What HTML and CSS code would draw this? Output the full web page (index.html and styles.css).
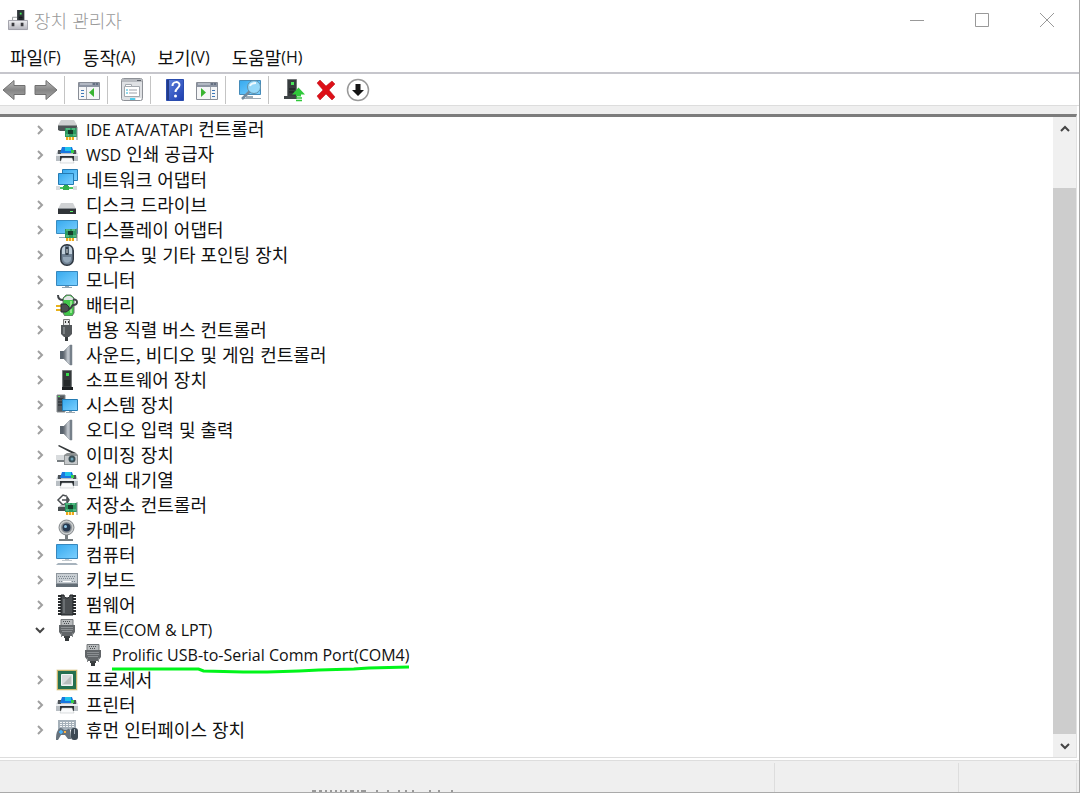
FILE: index.html
```html
<!DOCTYPE html>
<html lang="ko">
<head>
<meta charset="utf-8">
<title>장치 관리자</title>
<link rel="stylesheet" href="styles.css">
</head>
<body>
<svg class="defs" aria-hidden="true">
  <defs>
    <linearGradient id="g-screen" x1="0" y1="0" x2="1" y2="1"><stop offset="0" stop-color="#36a9ee"/><stop offset="1" stop-color="#7cd0ff"/></linearGradient>
    <linearGradient id="g-metal" x1="0" y1="0" x2="0" y2="1"><stop offset="0" stop-color="#f0f0f3"/><stop offset="1" stop-color="#b4b4bc"/></linearGradient>
    <linearGradient id="g-cone" x1="0" y1="0" x2="1" y2="0"><stop offset="0" stop-color="#646b73"/><stop offset="0.5" stop-color="#c6ccd3"/><stop offset="1" stop-color="#737b85"/></linearGradient>
    <linearGradient id="g-arrow" x1="0" y1="0" x2="0" y2="1"><stop offset="0" stop-color="#bcbcbc"/><stop offset="0.5" stop-color="#858585"/><stop offset="1" stop-color="#a9a9a9"/></linearGradient>
    <linearGradient id="g-help" x1="0" y1="0" x2="1" y2="1"><stop offset="0" stop-color="#5f83df"/><stop offset="1" stop-color="#1c3cae"/></linearGradient>
    <g id="p-card"><path d="M9 7h12v9H9z" fill="#2b9a60"/><path d="M10 8h4M16 8h3M10 14h3M17 14h3" stroke="#7ad2a0"/><path d="M12 9h5v4h-5z" fill="#173f2c"/><path d="M10 16h8v3h-8z" fill="#eda61c"/><path d="M12.500 16v3M15.500 16v3" stroke="#fff0a5"/><path d="M21 6v13" stroke="#858b8e"/></g>
  </defs>
  <symbol id="i-app" viewBox="0 0 22 22"><path d="M10 0h8v12h-8z" fill="#30363a"/><path d="M12 8h4M12 10h4" stroke="#0b0d0e"/><path d="M13 3h2v2h-2z" fill="#42e557"/><path d="M.5 11.500h21v10H.5z" fill="url(#g-metal)" stroke="#9b9ba3"/><path d="M4 14h3v4H4zM14 14h3v4h-3z" fill="#3b3b3f"/><path d="M5 11V8h5" fill="none" stroke="#94989b"/></symbol>
  <symbol id="i-ide" viewBox="0 0 22 22"><path d="M5 1h13l3 5H2z" fill="#cfd0d1"/><path d="M2 6h19v5l-2 1H4l-2-1z" fill="#4e5355"/><path d="M2 6.500h19" stroke="#8b8f90"/><use href="#p-card" y="2"/></symbol>
  <symbol id="i-printer" viewBox="0 0 22 22"><path d="M2 6h18l2 5v6H0v-6z" fill="#b9bfc4"/><path d="M2 6h3v4H2zM17 6h3v4h-3z" fill="#4d5358"/><path d="M6 3h10l2 6H4z" fill="#1877e0"/><path d="M9 3h6v4H9z" fill="#20c3ea"/><path d="M15 6h3v3h-3z" fill="#35cc48"/><path d="M0 10h22v2H0z" fill="#eceff1"/><path d="M4 12h14v5H4z" fill="#2b3034"/><path d="M6 14h10l2 5H4z" fill="#fafbfc" stroke="#b4babd" stroke-width=".5"/></symbol>
  <symbol id="i-network" viewBox="0 0 22 22"><path d="M6.500.5h15v11h-15z" fill="url(#g-screen)" stroke="#247ab2"/><path d="M2.500 4.500h15v11h-15z" fill="url(#g-screen)" stroke="#247ab2"/><path d="M8 16h4v2H8z" fill="#29a94b"/><path d="M3 18h15v2H3z" fill="#4cc862"/><path d="M0 17h4v4H0zM17 17h4v4h-4z" fill="#d9dcde"/><path d="M7 17h6v4H7z" fill="#35ae4c"/></symbol>
  <symbol id="i-disk" viewBox="0 0 22 22"><path d="M5 9h12l3 6H2z" fill="#d0d2d4"/><path d="M2 14h18v6H2z" fill="#303438"/><path d="M2 14.500h18" stroke="#8a8f93"/><path d="M14 17h3v1h-3z" fill="#5cf66a"/></symbol>
  <symbol id="i-display" viewBox="0 0 22 22"><path d="M.5 1.500h21v13H.5z" fill="url(#g-screen)" stroke="#388cc0"/><path d="M3 18h7v1H3z" fill="#9ba9b4"/><use href="#p-card" y="3"/></symbol>
  <symbol id="i-mouse" viewBox="0 0 22 22"><rect x="4.750" y=".75" width="12.500" height="20.500" rx="6" fill="#6f8193" stroke="#2f3842" stroke-width="1.500"/><path d="M6 10V6c0-3 2-4 3-4v8zM13 2c1 0 3 1 3 4v4h-3z" fill="#c0cfdb"/><path d="M9.500 3h3v8h-3z" fill="#333e49"/><path d="M10.500 5h1v4h-1z" fill="#e6edf2"/><path d="M7 13v2c1 5 7 5 8 0v-2z" fill="#94a7b8"/></symbol>
  <symbol id="i-monitor" viewBox="0 0 22 22"><path d="M.5 2.500h21v14H.5z" fill="url(#g-screen)" stroke="#3787bd"/><path d="M9 17h4v1H9zM6 18h10v1H6z" fill="#93a4b1"/></symbol>
  <symbol id="i-battery" viewBox="0 0 22 22"><path d="M7 4l3-3h5l3 3v15l-2 3H9l-2-3z" fill="#42c64b" stroke="#68706d"/><path d="M8 4l3-2h3l3 2v2H8z" fill="#e1e4e5"/><path d="M15 7v12" stroke="#90e88a" stroke-width="2"/><path d="M2 1c0 3 2 5 5 5M13 15c3 0 2-3 4-4 2 0 4-1 4-3 0-2-2-3-4-2" fill="none" stroke="#404448" stroke-width="2"/><path d="M0 12h6M0 16h6" stroke="#e7b21d" stroke-width="2"/><path d="M5 10h5l3 3v3l-3 2H5z" fill="#4a4e50" stroke="#292d30"/></symbol>
  <symbol id="i-usb" viewBox="0 0 22 22"><path d="M7.500.5h6v6h-6z" fill="#e5e6e6" stroke="#777"/><path d="M9 2h1v2H9zM12 2h1v2h-1z" fill="#333"/><path d="M5 6h11v9l-3 3H8l-3-3z" fill="#53575a"/><path d="M7 8h2v7H7z" fill="#7c8184"/><path d="M9 18h3v4H9z" fill="#363a3c"/></symbol>
  <symbol id="i-sound" viewBox="0 0 22 22"><path d="M4 7h5v8H4z" fill="#59636d"/><path d="M8 7l6-6h2v20h-2l-6-6z" fill="url(#g-cone)" stroke="#7d868f" stroke-width=".5"/><path d="M14 1h2v20h-2z" fill="#76808a"/></symbol>
  <symbol id="i-software" viewBox="0 0 22 22"><path d="M6.500 1.500h9v17h-9z" fill="#35393b" stroke="#75797b"/><path d="M10 4h3v3h-3z" fill="#38dc4c"/><path d="M8 12h6M8 14h6M8 16h6" stroke="#151819"/><path d="M6 18h11v3H6z" fill="#1d2022"/></symbol>
  <symbol id="i-system" viewBox="0 0 22 22"><path d="M1 1h8v17H1z" fill="#555b60" stroke="#888d90"/><path d="M2 5h5M2 8h5M2 11h4" stroke="#20262a"/><path d="M2 2h2v1H2z" fill="#54e060"/><path d="M6.500 5.500h15v11h-15z" fill="url(#g-screen)" stroke="#247ab2"/><path d="M13 17h3v1h3v1h-9v-1h3z" fill="#9ba8b1"/></symbol>
  <symbol id="i-imaging" viewBox="0 0 22 22"><path d="M3 1l17 8-1 2L2 2z" fill="#34383a"/><path d="M0 11h9v5H0z" fill="#d9dcde"/><path d="M1 16h9v2H1z" fill="#777d81"/><path d="M8 11l3-2h9l2 2v10H8z" fill="#8d9192"/><path d="M9 12h12v8H9z" fill="#c5c8ca"/><circle cx="16" cy="15" r="3.500" fill="#3b5058"/><circle cx="16" cy="15" r="1.500" fill="#6fa2b7"/></symbol>
  <symbol id="i-storage" viewBox="0 0 22 22"><path d="M10 2L7 1 2 6l5 5 3-2M6 6h5V3l2 3-2 3V6" fill="none" stroke="#4a4e51" stroke-width="1.500"/><path d="M2 13h10v4H2z" fill="#484f51"/><path d="M2 13l3-2h6v2z" fill="#b5b9bc"/><use href="#p-card" y="2"/></symbol>
  <symbol id="i-camera" viewBox="0 0 22 22"><circle cx="10.500" cy="8.500" r="7.500" fill="#c9cccd" stroke="#84888b"/><circle cx="10.500" cy="8.500" r="5.500" fill="#8b9095"/><circle cx="10.500" cy="8.500" r="4" fill="#26384f"/><circle cx="9.500" cy="7.500" r="1.500" fill="#8fc7e8"/><path d="M9 16h3v4h5v2H3v-2h6z" fill="#777d80"/></symbol>
  <symbol id="i-computer" viewBox="0 0 22 22"><path d="M.5.5h21v14H.5z" fill="url(#g-screen)" stroke="#3787bd"/><path d="M9 15h4v1h3v1H6v-1h3z" fill="#c2c9ce"/><path d="M2 19h18l2 2H0z" fill="#a7b3bd"/></symbol>
  <symbol id="i-keyboard" viewBox="0 0 22 22"><path d="M0 4h22v14H0z" fill="#8e969d"/><path d="M1 5h20v9H1z" fill="#c8ced3"/><path d="M2 7.500h18M3 9.500h16M3 12.500h3M16 12.500h3" stroke="#7c8790" stroke-dasharray="1 1"/><path d="M7 12.500h8" stroke="#fff"/><path d="M0 15h22v3H0z" fill="#636d75"/></symbol>
  <symbol id="i-firmware" viewBox="0 0 22 22"><path d="M3.500 1v20M18.500 1v20" stroke="#292c2e" stroke-width="3" stroke-dasharray="2 1"/><path d="M5 1h3c0 4 6 4 6 0h3v20H5z" fill="#4b4f52" stroke="#1d2022"/><path d="M7 5h2v14H7z" fill="#6a6f72"/></symbol>
  <symbol id="i-port" viewBox="0 0 22 22"><path d="M5 .5h12v6H5z" fill="#b8bbbd" stroke="#74787b"/><path d="M7 2.500h8M8 4.500h6" stroke="#4a4e51" stroke-dasharray="1 1"/><path d="M3 6h16v7l-3 4H6l-3-4z" fill="#626669"/><path d="M5 8.500h12M5 10.500h12M6 12.500h10" stroke="#8b8f92"/><path d="M8 17h6v2H8z" fill="#3d4143"/><path d="M9 19h4v3H9z" fill="#35393b"/><path d="M5.500 14v4M16.500 14v4" stroke="#85898b"/></symbol>
  <symbol id="i-cpu" viewBox="0 0 22 22"><rect x=".5" y=".5" width="21" height="21" fill="#cbb66b" stroke="#fff" stroke-dasharray="1 1"/><path d="M2 2h18v18H2z" fill="#246f4f"/><path d="M5.500 5.500h11v11h-11z" fill="#d9dcdc" stroke="#f3f5f4"/><path d="M7 15L15 7v8z" fill="#b9bebd"/></symbol>
  <symbol id="i-hid" viewBox="0 0 22 22"><path d="M2 1h18v10H2z" fill="#a5b0b9"/><path d="M4 3.500h14M4 5.500h14M4 7.500h14" stroke="#f4f6f7" stroke-dasharray="2 1"/><path d="M2 11c2-3 4-2 6 0h3c2-3 4-1 4 9h-3l-3-4H5l-3 5H0c0-4 0-7 2-10z" fill="#67737d"/><path d="M3 13h4M5 11v4" stroke="#4ab8ff" stroke-width="1.500"/><path d="M8 12h2v2H8z" fill="#ffb340"/><rect x="15" y="9" width="7" height="12" rx="3" fill="#3d4954"/><path d="M18.500 10v5" stroke="#a6b2bd"/></symbol>
  <symbol id="i-back" viewBox="0 0 24 24"><path d="M1 12L12 2.500v5h11v9H12v5z" fill="url(#g-arrow)" stroke="#707070" stroke-linejoin="round"/></symbol>
  <symbol id="i-forward" viewBox="0 0 24 24"><path d="M23 12L12 2.500v5H1v9h11v5z" fill="url(#g-arrow)" stroke="#707070" stroke-linejoin="round"/></symbol>
  <symbol id="i-tree" viewBox="0 0 24 24"><path d="M1.500 4.500h21v17h-21z" fill="#f5f6f7" stroke="#888d96"/><path d="M2 5h20v4H2z" fill="#8d95a3"/><path d="M3 6h12" stroke="#d8dce3"/><path d="M16 6h2M19 6h2" stroke="#3d4a60"/><path d="M9.500 9v12" stroke="#a2a7ae"/><path d="M4 12.500h4M4 15.500h4M4 18.500h4" stroke="#3f79b8" stroke-dasharray="3 1"/><path d="M17 10v9l-5-4.500z" fill="#39b431"/></symbol>
  <symbol id="i-pane" viewBox="0 0 24 24"><path d="M1.500 4.500h21v17h-21z" fill="#f5f6f7" stroke="#888d96"/><path d="M2 5h20v4H2z" fill="#8d95a3"/><path d="M3 6h12" stroke="#d8dce3"/><path d="M16 6h2M19 6h2" stroke="#3d4a60"/><path d="M15.500 9v12" stroke="#a2a7ae"/><path d="M17 12.500h4M17 15.500h4M17 18.500h4" stroke="#3f79b8" stroke-dasharray="3 1"/><path d="M6 10v9l5-4.500z" fill="#39b431"/></symbol>
  <symbol id="i-props" viewBox="0 0 24 24"><rect x="1.500" y=".5" width="21" height="22" rx="2" fill="#dfe1e4" stroke="#8e9197"/><path d="M2 1h20v3H2z" fill="#b8bbc0"/><path d="M17 2.500h4" stroke="#5d6269"/><path d="M4.500 8.500h15v10h-15z" fill="#fff" stroke="#a3a8ae"/><path d="M5.500 6.500h6v2h-6z" fill="#fff" stroke="#a3a8ae"/><path d="M6 12h2M6 15h2" stroke="#2ab4d8"/><path d="M9 12h8M9 15h8" stroke="#9ca1a9"/><path d="M10 20h5v2h-5z" fill="#50cceb"/><path d="M16 20h5v2h-5z" fill="#fff"/></symbol>
  <symbol id="i-help" viewBox="0 0 24 24"><path d="M3.500 1.500h17v21h-17z" fill="url(#g-help)" stroke="#2a4cae"/><path d="M5 2v20" stroke="#233b87" stroke-width="2"/><path d="M9.500 8c0-5 7-5 7-1 0 3-4 3-4 7" fill="none" stroke="#fff" stroke-width="2"/><circle cx="12.500" cy="18" r="1.500" fill="#fff"/></symbol>
  <symbol id="i-scan" viewBox="0 0 24 24"><path d="M1.500 2.500h21v14h-21z" fill="url(#g-screen)" stroke="#458bb9"/><path d="M8 18h7v2H8zM4 20h19v1H4z" fill="#9caab5"/><path d="M12 13l-8 8" stroke="#728a9d" stroke-width="2.500"/><circle cx="16" cy="9" r="6.500" fill="#9edcf9" fill-opacity=".85" stroke="#618fa9"/><path d="M12 8c1-3 4-3 6-3" fill="none" stroke="#eefaff" stroke-width="2"/></symbol>
  <symbol id="i-update" viewBox="0 0 24 24"><path d="M5.500 1.500h9v17h-9z" fill="#373c3e" stroke="#74787a"/><path d="M9 4h3v3H9z" fill="#49e55a"/><path d="M7 11h6M7 14h5" stroke="#171a1b"/><path d="M2 18h13v3H2z" fill="#404548"/><path d="M16.500 9.500l6.500 7h-4v2h-5v-2h-4z" fill="#30c83b"/><path d="M14 20h6M14 22.500h6" stroke="#30c83b" stroke-width="1.500"/></symbol>
  <symbol id="i-remove" viewBox="0 0 24 24"><path d="M3 5l3-3 6 6 6-5 3 3-6 6 6 7-3 3-6-6-6 6-3-4 6-6z" fill="#dd1018" stroke="#b80d15" stroke-width=".5"/></symbol>
  <symbol id="i-disable" viewBox="0 0 24 24"><circle cx="12" cy="12" r="10.500" fill="#fff" stroke="#999" stroke-width="1.500"/><path d="M9.500 6h5v6h3.500L12 18l-6-6h3.500z" fill="#151515"/></symbol>
  <symbol id="i-chev" viewBox="0 0 12 12"><path d="M4 2l4 4-4 4" fill="none" stroke="#a0a0a0" stroke-width="2"/></symbol>
  <symbol id="i-open" viewBox="0 0 12 12"><path d="M2 4l4 4 4-4" fill="none" stroke="#444" stroke-width="2"/></symbol>
  <symbol id="i-up" viewBox="0 0 12 12"><path d="M2 8l4-4 4 4" fill="none" stroke="#444" stroke-width="2"/></symbol>
</svg>

<div class="window">
  <header class="titlebar">
    <svg class="app-icon"><use href="#i-app"/></svg>
    <h1 class="title">장치 관리자</h1>
    <div class="controls">
      <button class="control" aria-label="최소화"><svg class="glyph" viewBox="0 0 16 16"><path d="M1 8.500h14"/></svg></button>
      <button class="control" aria-label="최대화"><svg class="glyph" viewBox="0 0 16 16"><path d="M1.500 1.500h13v13h-13z"/></svg></button>
      <button class="control" aria-label="닫기"><svg class="glyph" viewBox="0 0 16 16"><path d="M1 1l14 14M15 1L1 15"/></svg></button>
    </div>
  </header>
  <nav class="menubar">
    <button class="menu">파일<span class="latin">(F)</span></button>
    <button class="menu">동작<span class="latin">(A)</span></button>
    <button class="menu">보기<span class="latin">(V)</span></button>
    <button class="menu">도움말<span class="latin">(H)</span></button>
  </nav>
  <div class="toolbar">
    <div class="group"><button class="tool" aria-label="뒤로"><svg><use href="#i-back"/></svg></button><button class="tool" aria-label="앞으로"><svg><use href="#i-forward"/></svg></button></div>
    <div class="group"><button class="tool" aria-label="콘솔 트리"><svg><use href="#i-tree"/></svg></button></div>
    <div class="group"><button class="tool" aria-label="속성"><svg><use href="#i-props"/></svg></button></div>
    <div class="group"><button class="tool" aria-label="도움말"><svg><use href="#i-help"/></svg></button><button class="tool" aria-label="작업 창"><svg><use href="#i-pane"/></svg></button></div>
    <div class="group"><button class="tool" aria-label="하드웨어 변경 사항 검색"><svg><use href="#i-scan"/></svg></button></div>
    <div class="group"><button class="tool" aria-label="드라이버 업데이트"><svg><use href="#i-update"/></svg></button><button class="tool" aria-label="제거"><svg><use href="#i-remove"/></svg></button><button class="tool" aria-label="사용 안 함"><svg><use href="#i-disable"/></svg></button></div>
  </div>
  <main class="content">
    <ul class="tree">
      <li class="node"><button class="toggle" aria-label="펼치기"><svg><use href="#i-chev"/></svg></button><svg class="icon"><use href="#i-ide"/></svg><span class="label"><span class="latin">IDE ATA/ATAPI</span> 컨트롤러</span></li>
      <li class="node"><button class="toggle" aria-label="펼치기"><svg><use href="#i-chev"/></svg></button><svg class="icon"><use href="#i-printer"/></svg><span class="label"><span class="latin">WSD</span> 인쇄 공급자</span></li>
      <li class="node"><button class="toggle" aria-label="펼치기"><svg><use href="#i-chev"/></svg></button><svg class="icon"><use href="#i-network"/></svg><span class="label">네트워크 어댑터</span></li>
      <li class="node"><button class="toggle" aria-label="펼치기"><svg><use href="#i-chev"/></svg></button><svg class="icon"><use href="#i-disk"/></svg><span class="label">디스크 드라이브</span></li>
      <li class="node"><button class="toggle" aria-label="펼치기"><svg><use href="#i-chev"/></svg></button><svg class="icon"><use href="#i-display"/></svg><span class="label">디스플레이 어댑터</span></li>
      <li class="node"><button class="toggle" aria-label="펼치기"><svg><use href="#i-chev"/></svg></button><svg class="icon"><use href="#i-mouse"/></svg><span class="label">마우스 및 기타 포인팅 장치</span></li>
      <li class="node"><button class="toggle" aria-label="펼치기"><svg><use href="#i-chev"/></svg></button><svg class="icon"><use href="#i-monitor"/></svg><span class="label">모니터</span></li>
      <li class="node"><button class="toggle" aria-label="펼치기"><svg><use href="#i-chev"/></svg></button><svg class="icon"><use href="#i-battery"/></svg><span class="label">배터리</span></li>
      <li class="node"><button class="toggle" aria-label="펼치기"><svg><use href="#i-chev"/></svg></button><svg class="icon"><use href="#i-usb"/></svg><span class="label">범용 직렬 버스 컨트롤러</span></li>
      <li class="node"><button class="toggle" aria-label="펼치기"><svg><use href="#i-chev"/></svg></button><svg class="icon"><use href="#i-sound"/></svg><span class="label">사운드, 비디오 및 게임 컨트롤러</span></li>
      <li class="node"><button class="toggle" aria-label="펼치기"><svg><use href="#i-chev"/></svg></button><svg class="icon"><use href="#i-software"/></svg><span class="label">소프트웨어 장치</span></li>
      <li class="node"><button class="toggle" aria-label="펼치기"><svg><use href="#i-chev"/></svg></button><svg class="icon"><use href="#i-system"/></svg><span class="label">시스템 장치</span></li>
      <li class="node"><button class="toggle" aria-label="펼치기"><svg><use href="#i-chev"/></svg></button><svg class="icon"><use href="#i-sound"/></svg><span class="label">오디오 입력 및 출력</span></li>
      <li class="node"><button class="toggle" aria-label="펼치기"><svg><use href="#i-chev"/></svg></button><svg class="icon"><use href="#i-imaging"/></svg><span class="label">이미징 장치</span></li>
      <li class="node"><button class="toggle" aria-label="펼치기"><svg><use href="#i-chev"/></svg></button><svg class="icon"><use href="#i-printer"/></svg><span class="label">인쇄 대기열</span></li>
      <li class="node"><button class="toggle" aria-label="펼치기"><svg><use href="#i-chev"/></svg></button><svg class="icon"><use href="#i-storage"/></svg><span class="label">저장소 컨트롤러</span></li>
      <li class="node"><button class="toggle" aria-label="펼치기"><svg><use href="#i-chev"/></svg></button><svg class="icon"><use href="#i-camera"/></svg><span class="label">카메라</span></li>
      <li class="node"><button class="toggle" aria-label="펼치기"><svg><use href="#i-chev"/></svg></button><svg class="icon"><use href="#i-computer"/></svg><span class="label">컴퓨터</span></li>
      <li class="node"><button class="toggle" aria-label="펼치기"><svg><use href="#i-chev"/></svg></button><svg class="icon"><use href="#i-keyboard"/></svg><span class="label">키보드</span></li>
      <li class="node"><button class="toggle" aria-label="펼치기"><svg><use href="#i-chev"/></svg></button><svg class="icon"><use href="#i-firmware"/></svg><span class="label">펌웨어</span></li>
      <li class="node"><button class="toggle" aria-label="접기"><svg><use href="#i-open"/></svg></button><svg class="icon"><use href="#i-port"/></svg><span class="label">포트<span class="latin">(COM &amp; LPT)</span></span></li>
      <li class="node child"><svg class="icon"><use href="#i-port"/></svg><span class="label marked"><span class="latin">Prolific USB-to-Serial Comm Port(COM4)</span><svg class="marker" viewBox="0 0 299 10" preserveAspectRatio="none"><path d="M0 4h87l5 2 40 1h24l32-1 20-1 35-1 15-1 41-1"/></svg></span></li>
      <li class="node"><button class="toggle" aria-label="펼치기"><svg><use href="#i-chev"/></svg></button><svg class="icon"><use href="#i-cpu"/></svg><span class="label">프로세서</span></li>
      <li class="node"><button class="toggle" aria-label="펼치기"><svg><use href="#i-chev"/></svg></button><svg class="icon"><use href="#i-printer"/></svg><span class="label">프린터</span></li>
      <li class="node"><button class="toggle" aria-label="펼치기"><svg><use href="#i-chev"/></svg></button><svg class="icon"><use href="#i-hid"/></svg><span class="label">휴먼 인터페이스 장치</span></li>
    </ul>
    <div class="scrollbar">
      <button class="scroll-btn" aria-label="위로"><svg><use href="#i-up"/></svg></button>
      <div class="track"><div class="thumb"></div></div>
      <button class="scroll-btn" aria-label="아래로"><svg><use href="#i-open"/></svg></button>
    </div>
  </main>
  <footer class="statusbar">
    <div class="status main-status"><svg class="sliver" viewBox="0 0 146 2"><path d="M0 1h4M7 1h3M13 1h2M18 1h2M23 1h2M28 1h2M33 1h2M38 1h4M45 1h2M49 1h5M64 1h2M75 1h2M86 1h2M93 1h2M100 1h2M117 1h2M126 1h2M139 1h2"/></svg></div>
    <div class="status"></div>
    <div class="status"></div>
  </footer>
</div>
</body>
</html>
```
FILE: styles.css
```css
* { box-sizing: border-box; }
body {
  margin: 0;
  color: #111;
  background: #fff;
  font: 18px/25px "Noto Sans CJK KR", sans-serif;
}
button {
  display: flex;
  align-items: center;
  justify-content: center;
  padding: 0;
  border: 0;
  background: transparent;
  color: inherit;
  font: inherit;
}
svg { display: block; flex: none; }
.defs { position: absolute; width: 0; height: 0; }
.latin { font-family: "Open Sans", "Noto Sans CJK KR", sans-serif; font-size: 16px; }

.window {
  display: flex;
  flex-direction: column;
  min-height: 100vh;
  border-right: 1px solid #aaa;
  border-bottom: 1px solid #aaa;
}

.titlebar { display: flex; align-items: center; height: 40px; padding-left: 8px; }
.app-icon { width: 20px; height: 22px; }
.title { flex: 1; margin: 0 0 0 6px; color: #999; font-size: 18px; font-weight: 300; }
.controls { display: flex; }
.control { width: 65px; height: 40px; }
.glyph { width: 16px; height: 16px; fill: none; stroke: #999; }

.menubar { display: flex; align-items: center; gap: 22px; height: 32px; padding: 2px 10px 0; }

.toolbar {
  display: flex;
  align-items: center;
  height: 34px;
  border-top: 2px solid #c6c6cc;
  border-bottom: 1px solid #ddd;
}
.group {
  display: flex;
  align-items: center;
  gap: 8px;
  height: 28px;
  padding: 0 6px 0 12px;
  border-right: 1px solid #c4c4c4;
}
.group:first-child { padding: 0 6px 0 2px; }
.group:last-child { padding-left: 13px; border: 0; }
.tool svg { width: 24px; height: 24px; }

.content {
  display: flex;
  flex: 1;
  margin-top: 8px;
  margin-right: 2px;
  border-top: 3px solid #7c7c7c;
  border-right: 1px solid #e2e2e2;
  border-bottom: 1px solid #ddd;
  box-shadow: 0 -8px #efefef;
}
.tree { flex: 1; margin: 0; padding: 0 0 12px 34px; list-style: none; }
.node { display: flex; align-items: center; height: 25px; }
.toggle svg { width: 12px; height: 12px; }
.icon { width: 22px; height: 22px; margin-left: 10px; }
.label { margin-left: 8px; white-space: nowrap; }
.child { padding-left: 38px; }
.marked { position: relative; }
.marker {
  position: absolute;
  left: 0;
  top: 24px;
  width: 100%;
  height: 10px;
  fill: none;
  stroke: #00f51a;
  stroke-width: 3;
}

.scrollbar { display: flex; flex-direction: column; width: 23px; background: #f0f0f0; }
.scroll-btn { height: 23px; }
.scroll-btn svg { width: 12px; height: 12px; }
.track { display: flex; flex: 1; align-items: flex-end; }
.thumb { width: 100%; height: 92%; background: #cdcdcd; }

.statusbar {
  display: flex;
  height: 32px;
  margin-top: 2px;
  padding: 2px 2px 0 0;
  border-top: 1px solid #ddd;
  background: #efefef;
}
.status { flex: 0 0 17%; border-right: 1px solid #ddd; }
.status:last-child { flex-basis: 11%; }
.main-status { display: flex; flex: 1; align-items: flex-end; padding-left: 312px; }
.sliver { width: 146px; height: 2px; fill: none; stroke: #444; }
```
